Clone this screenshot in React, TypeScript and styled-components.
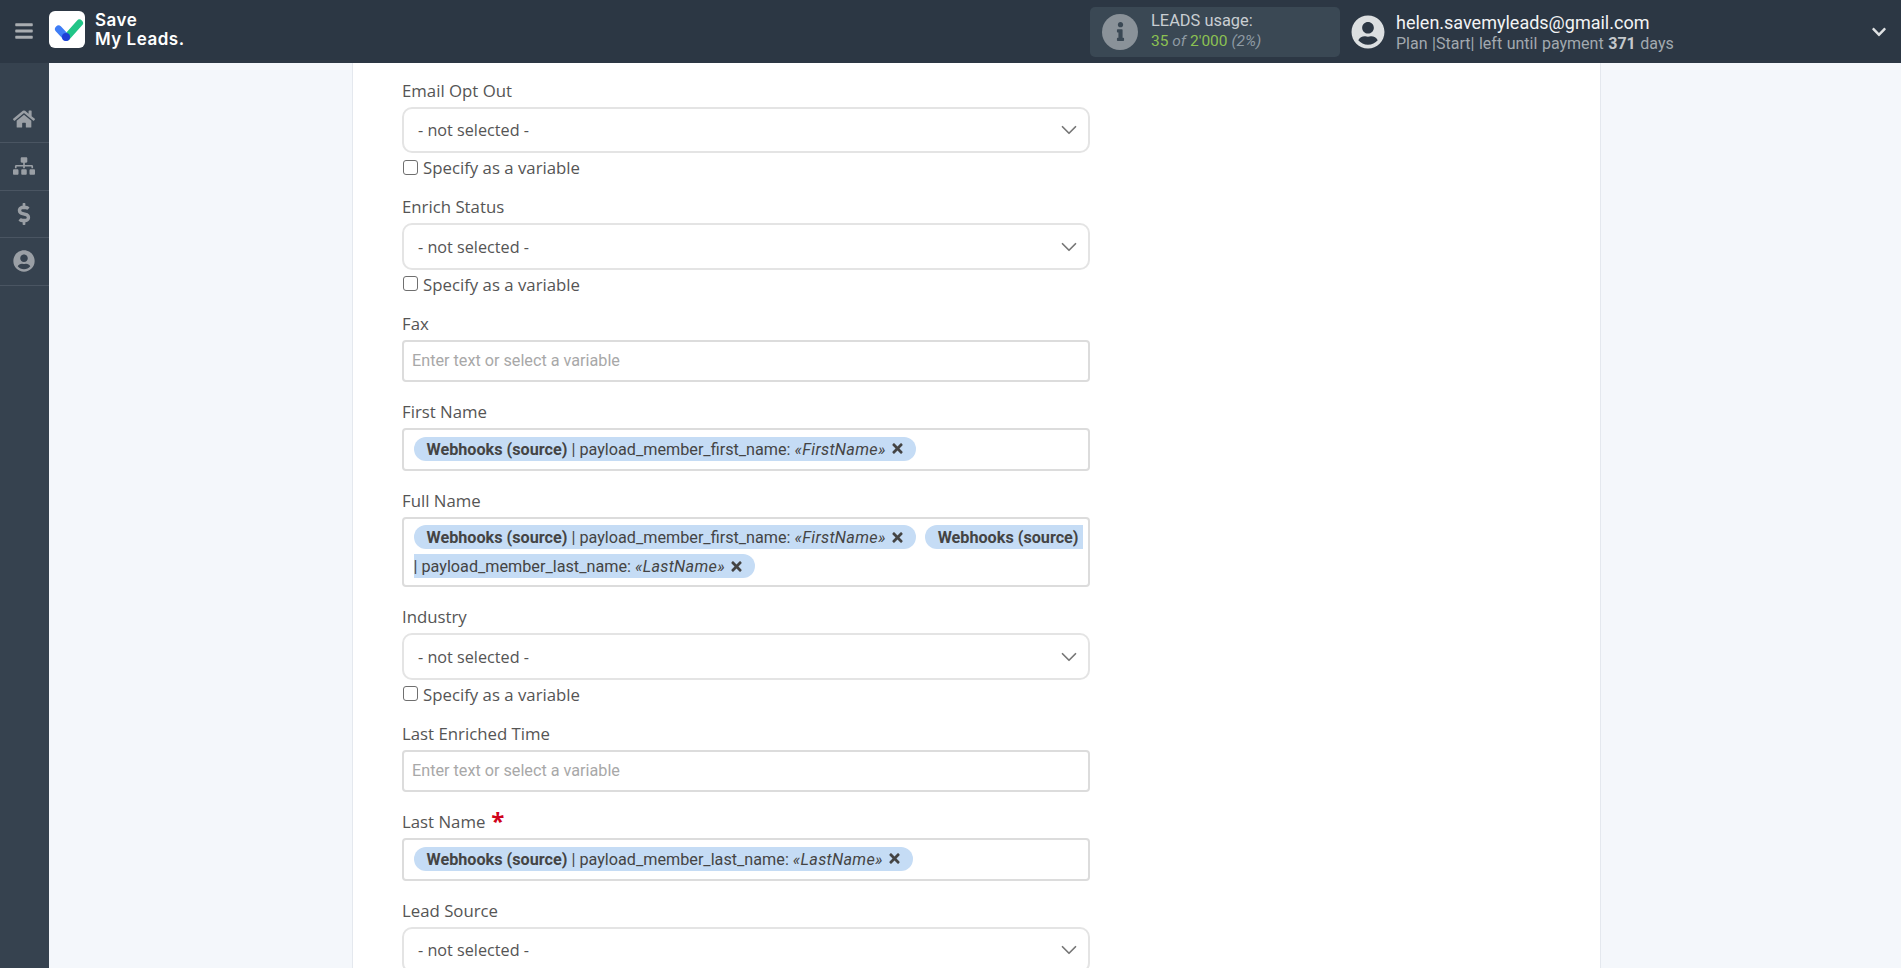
import { ReactNode } from "react";
import styled, { createGlobalStyle } from "styled-components";
import { FaBars, FaChevronDown, FaDollarSign, FaHome, FaSitemap, FaTimes, FaUserCircle, FaInfo } from "react-icons/fa";
import { ChevronDown } from "lucide-react";

const GlobalStyle = createGlobalStyle`
  html, body {
    margin: 0;
    height: 100%;
    overflow: hidden;
    background: #f4f7fb;
    font-family: "Open Sans", "Liberation Sans", sans-serif;
  }
  * {
    box-sizing: border-box;
  }
`;

const Page = styled.div`
  display: flex;
  flex-direction: column;
  height: 968px;
  overflow: hidden;
`;

const Header = styled.header`
  display: flex;
  align-items: center;
  flex: 0 0 63px;
  background: #2c3744;
  color: #fff;
`;

const Burger = styled.div`
  display: flex;
  justify-content: center;
  width: 48px;
  margin-bottom: 2px;
  color: #a9adb1;
  font-size: 20px;
`;

const LogoLink = styled.div`
  display: flex;
  align-items: center;
  gap: 10px;
  flex: 1;
  padding: 0 0 4px 1px;
`;

const LogoText = styled.div`
  font-family: Inter, "Liberation Sans", sans-serif;
  font-size: 17px;
  font-weight: 600;
  line-height: 19px;
  letter-spacing: 0.5px;
`;

const Usage = styled.div`
  display: flex;
  align-items: center;
  gap: 13px;
  width: 250px;
  height: 50px;
  padding-left: 12px;
  background: #3a4854;
  border-radius: 5px;
`;

const InfoBadge = styled.div`
  display: flex;
  align-items: center;
  justify-content: center;
  width: 36px;
  height: 36px;
  border-radius: 50%;
  background: #8a9299;
  color: #3a4854;
  font-size: 19px;
`;

const UsageText = styled.div`
  margin-top: -2px;
  font-family: Roboto, sans-serif;
  font-size: 16.4px;
  line-height: 20px;
  color: #c9ced2;
`;

const UsageCount = styled.div`
  font-size: 15.5px;
  color: #8e9aa3;
  b {
    font-weight: 400;
    color: #8cc152;
  }
  i {
    font-style: italic;
  }
`;

const Account = styled.div`
  display: flex;
  align-items: center;
  gap: 11px;
  width: 561px;
  padding-left: 11px;
  position: relative;
`;

const AccountIcon = styled.div`
  display: flex;
  color: #dcdfe1;
  font-size: 34px;
`;

const AccountText = styled.div`
  font-family: Roboto, sans-serif;
`;

const Email = styled.div`
  font-size: 18px;
  line-height: 24px;
  color: #f2f3f4;
`;

const Plan = styled.div`
  font-size: 16px;
  line-height: 18px;
  word-spacing: 0.6px;
  color: #a2a9af;
  b {
    font-weight: 700;
    color: #c4c8cc;
  }
`;

const AccountArrow = styled.div`
  position: absolute;
  right: 14px;
  top: 12px;
  color: #dfe1e3;
  font-size: 16px;
`;

const Body = styled.div`
  display: flex;
  flex: 1;
  min-height: 0;
`;

const Sidebar = styled.nav`
  flex: 0 0 49px;
  padding-top: 32.5px;
  background: #36424f;
`;

const SideItem = styled.div`
  display: flex;
  align-items: center;
  justify-content: center;
  height: 47.5px;
  padding-right: 1px;
  border-bottom: 1px solid #4a5562;
  color: #9a9fa5;
  font-size: 22px;
`;

const Main = styled.main`
  flex: 1;
  padding-left: 303px;
`;

const Card = styled.section`
  width: 1249px;
  height: 100%;
  padding: 15.9px 0 0 49px;
  background: #fff;
  border-left: 1px solid #e4e8ee;
  border-right: 1px solid #e4e8ee;
`;

const Field = styled.div`
  width: 688px;
  margin-bottom: 18px;
`;

const Label = styled.div`
  height: 23px;
  margin-bottom: 5px;
  font-size: 16.8px;
  font-weight: 500;
  line-height: 23px;
  color: #555;
`;

const Required = styled.span`
  margin-left: 6px;
  color: #d0021b;
  font-size: 24px;
  font-weight: 700;
  line-height: 16px;
  vertical-align: -2px;
`;

const SelectBox = styled.div`
  display: flex;
  align-items: center;
  justify-content: space-between;
  height: 46.5px;
  padding: 0 6.5px 0 14px;
  border: 2px solid #e4e4e4;
  border-radius: 10px;
  font-size: 16.2px;
  color: #555;
  svg {
    color: #777;
  }
`;

const CheckRow = styled.label`
  display: flex;
  align-items: center;
  gap: 5px;
  height: 20px;
  margin: 4.5px 0 -0.5px;
  font-size: 16.8px;
  font-weight: 500;
  color: #555;
`;

const CheckBox = styled.span`
  width: 15px;
  height: 15px;
  margin: 0 0 1px 1px;
  border: 1.5px solid #6f6f6f;
  border-radius: 3px;
  background: #fff;
`;

const TextBox = styled.div<{ $tall?: boolean }>`
  height: ${(p) => (p.$tall ? "70.5px" : "42.5px")};
  padding: 4px 8px 4px 9.5px;
  border: 2px solid #dcdcdc;
  border-radius: 4px;
  font-family: Roboto, sans-serif;
  font-size: 16.2px;
  line-height: 29px;
  color: #444;
`;

const Placeholder = styled.span`
  display: block;
  margin-left: -1.5px;
  line-height: 30px;
  color: #a8a8a8;
`;

const Chip = styled.span`
  padding: 2.5px 11px 2.5px 13px;
  margin-right: 9px;
  background: #c5dcf5;
  border-radius: 12px;
  color: #444;
  white-space: pre-wrap;
  b {
    font-weight: 700;
  }
  i {
    font-style: italic;
    letter-spacing: 0.3px;
  }
  svg {
    margin-left: 4px;
    font-size: 15px;
    vertical-align: -2px;
  }
`;

type ChipProps = { name: string; value: string };

const SourceChip = ({ name, value }: ChipProps) => (
  <Chip>
    <b>Webhooks (source)</b> | {name}: <i>«{value}»</i>
    <FaTimes />
  </Chip>
);

const SelectField = ({ label, check }: { label: ReactNode; check?: boolean }) => (
  <Field>
    <Label>{label}</Label>
    <SelectBox>
      - not selected -
      <ChevronDown size={26} strokeWidth={1.6} />
    </SelectBox>
    {check && (
      <CheckRow>
        <CheckBox />
        Specify as a variable
      </CheckRow>
    )}
  </Field>
);

const Logo = () => (
  <svg width="36" height="37" viewBox="0 0 36 37">
    <rect width="36" height="37" rx="6" fill="#fff" />
    <path d="M18 26L30.5 12" stroke="#21c587" strokeWidth="7" strokeLinecap="round" />
    <path d="M9.5 18L17 26" stroke="#3f7df6" strokeWidth="7" strokeLinecap="round" />
    <circle cx="17" cy="26" r="4" fill="#1f3fd6" />
  </svg>
);

export default function App() {
  return (
    <Page>
      <GlobalStyle />
      <Header>
        <Burger>
          <FaBars />
        </Burger>
        <LogoLink>
          <Logo />
          <LogoText>
            Save
            <br />
            My Leads.
          </LogoText>
        </LogoLink>
        <Usage>
          <InfoBadge>
            <FaInfo />
          </InfoBadge>
          <UsageText>
            LEADS usage:
            <UsageCount>
              <b>35</b> <i>of</i> <b>2'000</b> <i>(2%)</i>
            </UsageCount>
          </UsageText>
        </Usage>
        <Account>
          <AccountIcon>
            <FaUserCircle />
          </AccountIcon>
          <AccountText>
            <Email>helen.savemyleads@gmail.com</Email>
            <Plan>
              Plan |Start| left until payment <b>371</b> days
            </Plan>
          </AccountText>
          <AccountArrow>
            <FaChevronDown />
          </AccountArrow>
        </Account>
      </Header>
      <Body>
        <Sidebar>
          <SideItem>
            <FaHome />
          </SideItem>
          <SideItem>
            <FaSitemap />
          </SideItem>
          <SideItem>
            <FaDollarSign />
          </SideItem>
          <SideItem>
            <FaUserCircle />
          </SideItem>
        </Sidebar>
        <Main>
          <Card>
            <SelectField label="Email Opt Out" check />
            <SelectField label="Enrich Status" check />
            <Field>
              <Label>Fax</Label>
              <TextBox>
                <Placeholder>Enter text or select a variable</Placeholder>
              </TextBox>
            </Field>
            <Field>
              <Label>First Name</Label>
              <TextBox>
                <SourceChip name="payload_member_first_name" value="FirstName" />
              </TextBox>
            </Field>
            <Field>
              <Label>Full Name</Label>
              <TextBox $tall>
                <SourceChip name="payload_member_first_name" value="FirstName" />
                <SourceChip name="payload_member_last_name" value="LastName" />
              </TextBox>
            </Field>
            <SelectField label="Industry" check />
            <Field>
              <Label>Last Enriched Time</Label>
              <TextBox>
                <Placeholder>Enter text or select a variable</Placeholder>
              </TextBox>
            </Field>
            <Field>
              <Label>
                Last Name<Required>*</Required>
              </Label>
              <TextBox>
                <SourceChip name="payload_member_last_name" value="LastName" />
              </TextBox>
            </Field>
            <SelectField label="Lead Source" />
          </Card>
        </Main>
      </Body>
    </Page>
  );
}
